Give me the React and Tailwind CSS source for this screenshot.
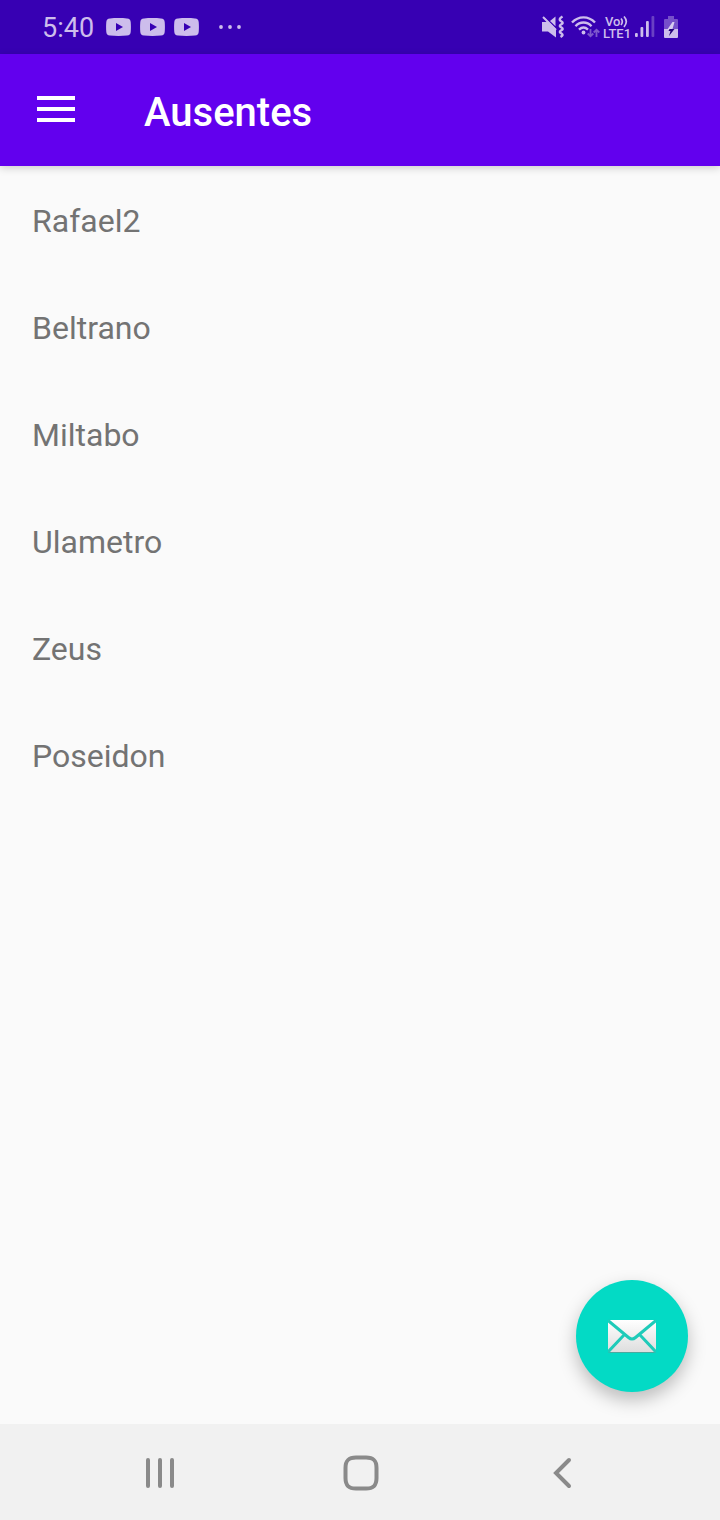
import React from "react";

const people = ["Rafael2", "Beltrano", "Miltabo", "Ulametro", "Zeus", "Poseidon"];

function VideoIcon() {
  return (
    <svg className="h-[18px] w-[25px]" viewBox="0 0 25 18" fill="#cdbdec" aria-hidden="true">
      <path
        fillRule="evenodd"
        d="M4 .4C9 -.1 16 -.1 21 .4 23.6 .6 24.4 1.6 24.7 4 25 7.500 25 10.500 24.700 14 24.400 16.400 23.600 17.400 21 17.600 16 18.100 9 18.100 4 17.600 1.400 17.400 .6 16.400 .3 14 0 10.500 0 7.500 .3 4 .6 1.600 1.400 .6 4 .4ZM10 5V13L17 9Z"
      />
    </svg>
  );
}

function MuteVibrateIcon() {
  return (
    <svg className="h-6 w-6" viewBox="0 0 24 24" fill="none" aria-hidden="true">
      <path d="M3 2L15 14V22.500L7 16.500H1V7H6Z" fill="#cdbdec" />
      <path d="M2 2L15 15" stroke="#cdbdec" strokeWidth="2" />
      <path d="M9 6L14.500 1.500V11.300Z" fill="#cdbdec" />
      <path
        d="M21.500 1.500Q16.500 4.500 20.500 6.500Q23 8 20 9.500Q17.500 11 20.500 12.500Q23 14 20 15.500Q17.500 17 20.500 18.500Q23 20 19.500 22"
        stroke="#cdbdec"
        strokeWidth="2.500"
      />
    </svg>
  );
}

function WifiIcon() {
  return (
    <svg className="h-6 w-[29px]" viewBox="0 0 29 24" fill="none" aria-hidden="true">
      <g stroke="#cdbdec" strokeWidth="2.400">
        <path d="M1 7.500C7.500 .6 17.500 .6 24 7.500" />
        <path d="M4.500 11.200C9 6.300 16 6.300 20.500 11.200" />
        <path d="M8 14.600C11 11.800 14 11.800 17 14.600" />
      </g>
      <circle cx="12.500" cy="17.500" r="1.900" fill="#cdbdec" />
      <g stroke="#7e58cc" strokeWidth="1.800">
        <path d="M19.500 14V21M16.700 18.500L19.500 21.300L22.300 18.500" />
        <path d="M25.500 22V15M22.700 17.500L25.500 14.700L28.300 17.500" />
      </g>
    </svg>
  );
}

function SignalIcon() {
  return (
    <svg className="h-[22px] w-5" viewBox="0 0 20 22" aria-hidden="true">
      <g fill="#cdbdec">
        <rect x="0" y="17" width="2.800" height="4" rx="1" />
        <rect x="5.500" y="11" width="2.800" height="10" rx="1" />
        <rect x="11" y="5" width="2.800" height="16" rx="1" />
      </g>
      <rect x="16.500" y="0" width="2.800" height="21" rx="1" fill="#6a40c4" />
    </svg>
  );
}

function BatteryIcon() {
  return (
    <svg className="h-[23px] w-[14px]" viewBox="0 0 14 23" aria-hidden="true">
      <path d="M4 0H10V3H13Q14 3 14 4V13H0V4Q0 3 1 3H4Z" fill="#7650ca" />
      <path d="M0 13H14V21Q14 22 13 22H1Q0 22 0 21Z" fill="#cdbdec" />
      <path d="M8.500 6L3 14H6.500L5.500 13H8.500L10.500 6Z" fill="#d8ccf0" />
      <path d="M5.500 13H10.500L5 20L6.500 15H4.500Z" fill="#24007c" />
    </svg>
  );
}

function StatusBar() {
  return (
    <div className="flex h-[54px] items-center justify-between bg-[#3700b3] pl-[42px] pr-[42px] text-[#cdbdec]">
      <div className="flex items-center">
        <span className="w-16 pt-0.5 text-[27px] leading-8">5:40</span>
        <div className="flex gap-[9px]">
          <VideoIcon />
          <VideoIcon />
          <VideoIcon />
        </div>
        <svg className="ml-5 h-1 w-[22px]" viewBox="0 0 22 4" fill="#cdbdec" aria-hidden="true">
          <circle cx="2" cy="2" r="1.900" />
          <circle cx="11" cy="2" r="1.900" />
          <circle cx="20" cy="2" r="1.900" />
        </svg>
      </div>
      <div className="flex items-center">
        <MuteVibrateIcon />
        <div className="ml-1.5 flex">
          <WifiIcon />
        </div>
        <div className="ml-[3px] flex w-7 flex-col items-start pt-0.5 text-[13px] font-medium leading-3">
          <span className="flex items-center pl-0.5">
            Vo
            <svg className="h-3 w-2" viewBox="0 0 8 12" fill="none" stroke="#cdbdec" strokeWidth="1.700" aria-hidden="true">
              <path d="M1 2.500Q3.600 5.500 1 9M4 .5Q8.600 5.500 4 11" />
            </svg>
          </span>
          <span>LTE1</span>
        </div>
        <div className="ml-1 flex">
          <SignalIcon />
        </div>
        <div className="ml-[9px] flex">
          <BatteryIcon />
        </div>
      </div>
    </div>
  );
}

function AppBar() {
  return (
    <header className="relative flex h-28 items-center bg-[#6200ee] pl-8 text-white shadow-[0_2px_8px_rgba(0,0,0,0.18)]">
      <button type="button" aria-label="Menu" className="flex h-12 w-28 items-center">
        <svg className="h-12 w-12" viewBox="0 0 48 48" fill="currentColor" aria-hidden="true">
          <path d="M5 10H43V14H5ZM5 21H43V25H5ZM5 32H43V36H5Z" />
        </svg>
      </button>
      <h1 className="pt-1.5 text-[40px] font-medium leading-12">Ausentes</h1>
    </header>
  );
}

function MailIcon() {
  return (
    <svg className="h-[34px] w-12" viewBox="0 0 48 34" fill="none" aria-hidden="true">
      <defs>
        <linearGradient id="paper" x1="0" y1="0" x2="0" y2="1">
          <stop offset="0" stopColor="#ffffff" />
          <stop offset="1" stopColor="#dedede" />
        </linearGradient>
      </defs>
      <rect y="2" width="48" height="32" rx="2" fill="#4ba99f" />
      <rect y="1" width="48" height="32" rx="2" fill="url(#paper)" />
      <path
        d="M0 1.500L20.500 18.500Q24 21.500 27.500 18.500L48 1.500M0 33L16 16M48 33L32 16"
        stroke="#1fcbb9"
        strokeWidth="3"
      />
    </svg>
  );
}

function NavBar() {
  return (
    <nav className="flex h-24 items-center justify-center bg-[#f1f1f1] text-[#8a8a8a]">
      <button type="button" aria-label="Recent apps" className="flex h-full w-[28%] items-center justify-center">
        <svg className="h-10 w-10" viewBox="0 0 40 40" stroke="currentColor" strokeWidth="4" strokeLinecap="round">
          <path d="M10 8V34M22 8V34M34 8V34" />
        </svg>
      </button>
      <button type="button" aria-label="Home" className="flex h-full w-[28%] items-center justify-center">
        <svg className="h-10 w-10" viewBox="0 0 40 40" fill="none" stroke="currentColor" strokeWidth="4">
          <path d="M16 5.500H26C33.500 5.500 36.500 8.500 36.500 16V26C36.500 33.500 33.500 36.500 26 36.500H16C8.500 36.500 5.500 33.500 5.500 26V16C5.500 8.500 8.500 5.500 16 5.500Z" />
        </svg>
      </button>
      <button type="button" aria-label="Back" className="flex h-full w-[28%] items-center justify-center">
        <svg className="h-10 w-10" viewBox="0 0 40 40" fill="none" stroke="currentColor" strokeWidth="4" strokeLinecap="round" strokeLinejoin="miter">
          <path d="M27 8L14 21L27 34" />
        </svg>
      </button>
    </nav>
  );
}

export default function App() {
  return (
    <div className="flex min-h-screen flex-col bg-[#fafafa] font-['Roboto',sans-serif]">
      <StatusBar />
      <AppBar />
      <main className="relative flex-1 pt-0.5">
        <ul>
          {people.map((name) => (
            <li key={name} className="px-8 py-8 text-[32px] leading-[43px] text-[#737373]">
              {name}
            </li>
          ))}
        </ul>
        <button
          type="button"
          aria-label="Send message"
          className="absolute bottom-8 right-8 flex size-28 items-center justify-center rounded-full bg-[#03dac5] shadow-[0_8px_18px_rgba(0,0,0,0.25)]"
        >
          <MailIcon />
        </button>
      </main>
      <NavBar />
    </div>
  );
}
